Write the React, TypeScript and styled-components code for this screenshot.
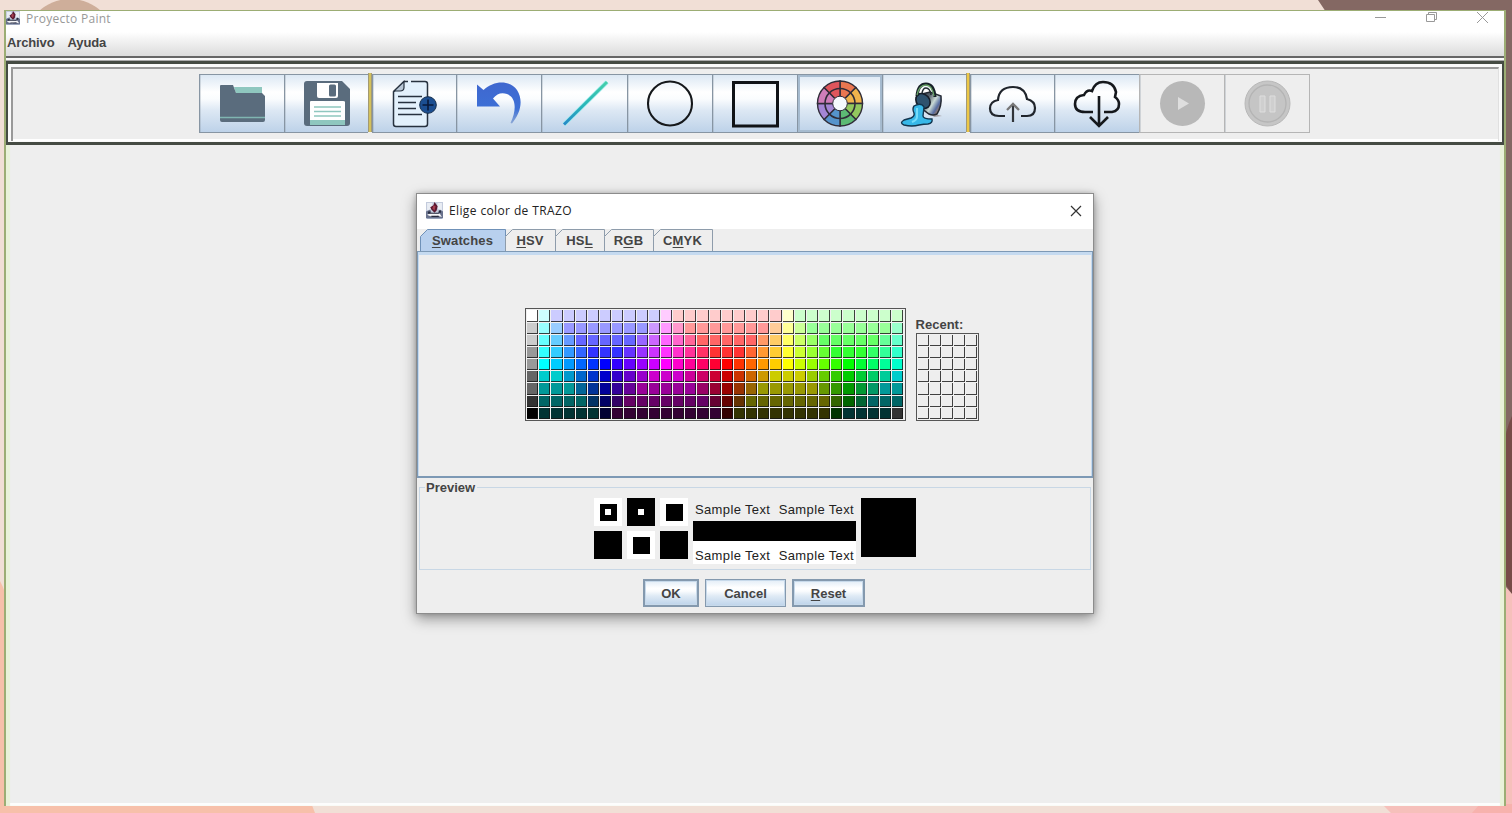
import React from "react";
import styled, { createGlobalStyle } from "styled-components";

const GlobalStyle = createGlobalStyle`
  * { box-sizing: border-box; }
  body { margin: 0; background: #f1dfd6; font-family: "Liberation Sans", Arial, sans-serif; color: #444; overflow: hidden; }
  svg { display: block; flex: none; }
`;

const Desktop = styled.div`
  position: relative;
  width: 1512px;
  height: 813px;
  padding: 10px 6px 7px 4px;
  display: flex;
`;

const Wallpaper = styled.svg`
  position: absolute;
  inset: 0;
`;

const AppWindow = styled.main`
  position: relative;
  flex: 1;
  display: flex;
  flex-direction: column;
  background: #eee;
  border: solid #9cad74;
  border-width: 1px 2px 0;
  box-shadow: inset 4px 0 1px #e9f2d9, inset -4px 0 1px #e9f2d9, inset 0 -3px 0 #fdfdfd;
`;

const TitleBar = styled.header`
  display: flex;
  height: 21px;
  background: #fff;
  padding-right: 14px;
`;

const TitleText = styled.h1<{ $tone: string; $spacing?: number }>`
  margin: 0;
  font: 400 12px/16px "Open Sans", "Noto Sans", sans-serif;
  letter-spacing: ${(p) => p.$spacing ?? 0}px;
  color: ${(p) => p.$tone};
  white-space: nowrap;
`;

const AppTitle = styled.div`
  display: flex;
  gap: 6px;
  flex: 1;
`;

const WindowControls = styled.div`
  display: flex;
  gap: 37px;
`;

const MenuBar = styled.nav`
  display: flex;
  gap: 13px;
  height: 24px;
  padding: 2px 1px;
  background: linear-gradient(#fff, #f4f4f4 30%, #dcdcdc);
`;

const MenuItem = styled.span`
  font-size: 13px;
  font-weight: 700;
  line-height: 18px;
  letter-spacing: -0.13px;
`;

const MenuRule = styled.div`
  height: 5px;
  background: linear-gradient(#666 0 2px, #fafafa 2px 4px, #aaa 4px);
`;

const ToolBarFrame = styled.section`
  height: 84px;
  border: solid #454b43;
  border-width: 3px 2px;
  padding: 3px;
  background: #fafafa;
`;

const ToolBar = styled.div`
  display: flex;
  justify-content: center;
  height: 74px;
  padding: 5px 3px 0 0;
  border: 2px solid #999;
  border-right: 1px solid #e0e0e0;
  border-bottom: 0;
  background: linear-gradient(#eee 0 70px, #fff 70px);
`;

const ToolButton = styled.button<{ $disabled?: boolean; $focused?: boolean; $width?: number }>`
  width: ${(p) => p.$width ?? 85}px;
  height: 59px;
  padding: 0;
  display: grid;
  place-items: center;
  border: 1px solid ${(p) => (p.$disabled ? "#b5b5b5" : "#8795a3")};
  border-right-width: 0;
  box-shadow: ${(p) => (p.$focused ? "inset 0 0 0 2px #a6bbcf" : "inset 1px 0 0 rgba(135,149,163,.3)")};
  background: ${(p) => (p.$disabled ? "#eee" : "linear-gradient(#dce8f4, #fff 30%, #fafcfe 42%, #dde8f4 62%, #bdd2e9)")};
  &:last-child { border-right-width: 1px; }
`;

const ToolSeparator = styled.i<{ $color: string }>`
  width: 4px;
  height: 59px;
  margin-top: -1px;
  border: solid #a39a74;
  border-width: 0 1px;
  background: ${(p) => p.$color};
`;

const Dialog = styled.section`
  position: absolute;
  left: 410px;
  top: 182px;
  width: 678px;
  height: 421px;
  display: flex;
  flex-direction: column;
  border: 1px solid #8c8c8c;
  background: #eee;
  box-shadow: 0 5px 13px rgba(0, 0, 0, 0.38), 0 0 5px rgba(0, 0, 0, 0.2);
`;

const DialogTitle = styled.header`
  display: flex;
  align-items: center;
  height: 35px;
  padding: 0 11px 2px 9px;
  gap: 6px;
  background: #fff;
  svg:last-child { margin-left: auto; }
`;

const TabRow = styled.div`
  display: flex;
  height: 22px;
  padding-left: 3px;
`;

const Tab = styled.div<{ $width: number }>`
  width: ${(p) => p.$width}px;
  position: relative;
  display: grid;
  place-items: center;
  font-size: 13px;
  font-weight: 700;
  letter-spacing: 0.15px;
  isolation: isolate;
  svg { position: absolute; inset: 0; z-index: -1; }
`;

const Mnemonic = styled.u`
  text-underline-offset: 2px;
  text-decoration-thickness: 1px;
`;

const ChooserPanel = styled.div`
  display: flex;
  align-items: flex-end;
  height: 227px;
  gap: 11px;
  padding: 0 0 55px 107px;
  border: 1px solid #7d99b5;
  border-bottom-width: 2px;
  box-shadow: inset 0 3px 0 #c5daf0, inset 1px 0 0 #c5daf0, inset -1px 0 0 #c5daf0;
`;

const Palette = styled.div<{ $columns: number; $rows: number }>`
  display: grid;
  grid-template-columns: repeat(${(p) => p.$columns}, 12.18px);
  grid-template-rows: repeat(${(p) => p.$rows}, 12.18px);
  width: ${(p) => p.$columns * 12.18 + 3}px;
  height: ${(p) => p.$rows * 12.18 + 3}px;
  padding: 1px;
  border: 1px solid #555;
  background: #f1f1f1;
`;

const Swatch = styled.span<{ $rgb: string }>`
  margin: 0 1px 1px 0;
  border: solid rgba(20, 20, 20, 0.8);
  border-width: 0 1px 1px 0;
  background: ${(p) => p.$rgb};
`;

const Recent = styled.div`
  display: flex;
  flex-direction: column;
  margin-left: -1px;
  font-size: 13px;
  font-weight: 700;
  line-height: 16px;
`;

const PreviewGroup = styled.fieldset`
  height: 91px;
  margin: 1px 2px 0;
  padding: 2px 0 0;
  border: 1px solid #c8d7e5;
  display: flex;
  justify-content: center;
`;

const PreviewLegend = styled.legend`
  margin-left: 5px;
  padding: 0 2px 0 1px;
  font-size: 13px;
  font-weight: 700;
  line-height: 17px;
`;

const PreviewContent = styled.div`
  display: flex;
  gap: 5px;
`;

const ToneGrid = styled.div`
  display: grid;
  grid-template: repeat(2, 28px) / repeat(3, 28px);
  gap: 5px;
`;

const Tone = styled.div<{ $background: string }>`
  display: grid;
  place-items: center;
  background: ${(p) => p.$background};
`;

const ToneCore = styled.div<{ $size: number; $fill: string }>`
  display: grid;
  place-items: center;
  width: ${(p) => p.$size}px;
  height: ${(p) => p.$size}px;
  background: ${(p) => p.$fill};
`;

const SampleStack = styled.div`
  display: grid;
  grid-template-rows: 23px 20px 23px;
  width: 163px;
`;

const SampleLine = styled.div<{ $background?: string }>`
  display: flex;
  align-items: center;
  justify-content: space-between;
  padding: 0 2px;
  font-size: 13px;
  letter-spacing: 0.36px;
  white-space: nowrap;
  color: #222;
  background: ${(p) => p.$background ?? "transparent"};
  &:last-child { align-items: flex-end; padding-bottom: 1px; }
`;

const CurrentColor = styled.div`
  width: 55px;
  height: 59px;
  background: #000;
`;

const ButtonRow = styled.footer`
  display: flex;
  justify-content: center;
  gap: 6px;
  padding: 9px 2px 0 0;
`;

const DialogButton = styled.button<{ $width: number; $heavy?: boolean }>`
  width: ${(p) => p.$width}px;
  height: 28px;
  padding: 1px 0 0;
  border: ${(p) => (p.$heavy ? 2 : 1)}px solid #8499ae;
  background: linear-gradient(#e2edf7, #fff 30%, #fafcfe 42%, #dfeaf5 62%, #bdd3ea);
  box-shadow: inset 0 0 0 1px #c7d9ea;
  font: 700 13px "Liberation Sans", Arial, sans-serif;
  color: #444;
`;

type Run = [string, number?];

/* Each palette row is stored as runs of hex triplets. */
const paletteRows: Run[][] = [
  [["fff"], ["cff"], ["ccf", 9], ["fcf"], ["fcc", 9], ["ffc"], ["cfc", 9]],
  [["ccc"], ["9ff"], ["9cf"], ["99f", 7], ["c9f"], ["f9f"], ["f9c"], ["f99", 7], ["fc9"], ["ff9"], ["cf9"], ["9f9", 7], ["9fc"]],
  [["ccc"], ["6ff"], ["6cf"], ["69f"], ["66f", 5], ["96f"], ["c6f"], ["f6f"], ["f6c"], ["f69"], ["f66", 5], ["f96"], ["fc6"], ["ff6"], ["cf6"], ["9f6"], ["6f6", 5], ["6f9"], ["6fc"]],
  [["999"], ["3ff"], ["3cf"], ["39f"], ["36f"], ["33f", 3], ["63f"], ["93f"], ["c3f"], ["f3f"], ["f3c"], ["f39"], ["f36"], ["f33", 3], ["f63"], ["f93"], ["fc3"], ["ff3"], ["cf3"], ["9f3"], ["6f3"], ["3f3", 3], ["3f6"], ["3f9"], ["3fc"]],
  [["999"], ["0ff"], ["0cf"], ["09f"], ["06f"], ["03f"], ["00f"], ["30f"], ["60f"], ["90f"], ["c0f"], ["f0f"], ["f0c"], ["f09"], ["f06"], ["f03"], ["f00"], ["f30"], ["f60"], ["f90"], ["fc0"], ["ff0"], ["cf0"], ["9f0"], ["6f0"], ["3f0"], ["0f0"], ["0f3"], ["0f6"], ["0f9"], ["0fc"]],
  [["666"], ["0cc", 2], ["09c"], ["06c"], ["03c"], ["00c"], ["30c"], ["60c"], ["90c"], ["c0c", 3], ["c09"], ["c06"], ["c03"], ["c00"], ["c30"], ["c60"], ["c90"], ["cc0", 3], ["9c0"], ["6c0"], ["3c0"], ["0c0"], ["0c3"], ["0c6"], ["0c9"], ["0cc"]],
  [["666"], ["099", 3], ["069"], ["039"], ["009"], ["309"], ["609"], ["909", 5], ["906"], ["903"], ["900"], ["930"], ["960"], ["990", 5], ["690"], ["390"], ["090"], ["093"], ["096"], ["099", 2]],
  [["333"], ["066", 4], ["036"], ["006"], ["306"], ["606", 7], ["603"], ["600"], ["630"], ["660", 7], ["360"], ["060"], ["063"], ["066", 3]],
  [["000"], ["033", 5], ["003"], ["303", 9], ["300"], ["330", 8], ["030"], ["033", 4], ["333"]],
];
const swatches = paletteRows.flatMap((row) => row.flatMap(([hex, n = 1]) => Array<string>(n).fill("#" + hex)));

const JavaIcon = ({ size = 16 }: { size?: number }) => (
  <svg width={size} height={size} viewBox="0 0 16 16">
    <path fill="#c3cbdc" d="M0 0h16v16H0z" />
    <path fill="#e9edf4" d="M1 1h5v5l-3 2H1zM11 1h4v7h-2l-3-3z" />
    <path fill="#68718c" d="M0 9l4-2 1 3 6 1 2-4 3 2v6H0z" />
    <path fill="#f5f5f7" d="M1 12l4-2 8 1 2 3-4-1-4 1-4-1z" />
    <path fill="#5b1830" d="M8 0l3 4-1 4-2 2-3-3-1-2 3-2z" />
    <path fill="#a73f50" d="M7 3l2 1-1 4-2-2z" />
    <path fill="#262a3e" d="M4 10h8v1H4zM12 8h2v2h-2zM2 9h2v2H2zM5 13h7v1H5z" />
    <path fill="#98a3ba" d="M1 15h14v1H1z" />
  </svg>
);

const Icon = ({ children, shift = 0 }: { children: React.ReactNode; shift?: number }) => (
  <svg width="83" height="57" viewBox={`${1 + shift} 1 83 57`} fill="none">{children}</svg>
);

const FolderIcon = () => (
  <Icon>
    <path d="M35 13H63v10H38z" fill="#8fc7bf" />
    <path d="M21 12q0-1 1-1h12l3 8h26l3 3v24q0 2-2 2H23q-2 0-2-2z" fill="#5a6c7d" />
    <path d="M21 43.500h45" stroke="#7fb5b1" strokeWidth="1.400" />
  </Icon>
);

const SaveIcon = () => (
  <Icon>
    <path d="M23 7h35l8 8v34q0 3-3 3H23q-3 0-3-3V10q0-3 3-3z" fill="#5a6c7d" />
    <path d="M33 9h21v13q0 2-2 2H35q-2 0-2-2z" fill="#fff" />
    <rect x="45" y="10.500" width="7" height="12" rx="1.500" fill="#5a6c7d" />
    <path d="M26 28q0-1 1-1h32q2 0 2 1v22H26z" fill="#fff" />
    <path d="M26 46h35v5H26z" fill="#8fc7bf" />
    <path d="M30 33h27M30 37.500h27M30 42h27" stroke="#8fc7bf" strokeWidth="1.300" />
  </Icon>
);

const DocumentIcon = () => (
  <Icon shift={1}>
    <path d="M33 7h21q3 0 3 3v40q0 3-3 3H25q-3 0-3-3V18z" fill="#e3f1fc" />
    <path d="M37 7.500H33L22.500 18v32q0 2.500 2.500 2.500h29q2.500 0 2.500-2.500V10q0-2.500-2.500-2.500H40" stroke="#27323f" strokeWidth="1.500" />
    <path d="M33 7.500v6q0 3.500-4 3.500h-6z" fill="#b8c6d5" stroke="#27323f" strokeWidth="1.200" />
    <path d="M27 22.500h24M27 28.500h18M27 34.500h18M27 40.500h24" stroke="#27323f" strokeWidth="1.600" />
    <circle cx="57" cy="31" r="8.300" fill="#1b4e91" stroke="#142d4c" />
    <path d="M51.500 31h11M57 25.500v11" stroke="#091a3a" strokeWidth="1.600" />
  </Icon>
);

const UndoIcon = () => (
  <Icon>
    <defs>
      <linearGradient id="undo-fill" x1="0" y1="0" x2="0" y2="1">
        <stop stopColor="#3f67cf" /><stop offset=".65" stopColor="#3d70d6" /><stop offset="1" stopColor="#8ba7d5" />
      </linearGradient>
    </defs>
    <path d="M21 10.500L27.500 16C38 6 54 6 61 16c7 11 3 24-5 33.500l-1.500-.5C61 36 60 23 51 20q-8-3-14 4.500L44 32.500H21z" fill="url(#undo-fill)" />
  </Icon>
);

const LineIcon = () => (
  <Icon>
    <defs>
      <linearGradient id="line-stroke" x1="0" y1="1" x2="1" y2="0">
        <stop stopColor="#2788c7" /><stop offset=".45" stopColor="#28b6b9" /><stop offset="1" stopColor="#45cfaa" />
      </linearGradient>
    </defs>
    <path d="M22 50.500L65 8" stroke="#a5eef0" strokeWidth="4.500" />
    <path d="M22 50.500L65 8" stroke="url(#line-stroke)" strokeWidth="3" />
  </Icon>
);

const wheelColors = ["#ea7650", "#efb34c", "#92c85e", "#5dba74", "#5593cc", "#a486d5", "#cf7db9", "#df555c"];

const WheelIcon = () => {
  const point = (angle: number, r: number) => `${43 + Math.sin(angle) * r} ${29.5 - Math.cos(angle) * r}`;
  return (
    <Icon>
      {wheelColors.map((color, i) => {
        const from = (i * Math.PI) / 4;
        return (
          <path key={color} d={`M43 29.5L${point(from, 22.5)}A22.5 22.5 0 0 1 ${point(from + Math.PI / 4, 22.5)}Z`} fill={color} stroke="#302c38" strokeWidth="1.4" />
        );
      })}
      <circle cx="43" cy="29.500" r="15" stroke="#302c38" strokeWidth="1.600" />
      <circle cx="43" cy="29.500" r="7.300" fill="#f5f9fd" stroke="#302c38" strokeWidth="1" />
    </Icon>
  );
};

const BucketIcon = () => (
  <Icon>
    <defs>
      <linearGradient id="bucket-metal" x1="0" y1=".2" x2="1" y2=".8">
        <stop stopColor="#3b4654" /><stop offset=".35" stopColor="#57616b" /><stop offset=".6" stopColor="#c9d9d5" /><stop offset=".8" stopColor="#566ca0" /><stop offset="1" stopColor="#c28749" />
      </linearGradient>
    </defs>
    <path d="M48 39l12 3-8 1z" fill="#a39ca0" />
    <path d="M36 21l12-3 11 4q1 10-4 18-4 2-8 0l-8-6z" fill="url(#bucket-metal)" stroke="#252a34" strokeWidth="1.500" />
    <ellipse cx="41" cy="27" rx="8" ry="6.500" transform="rotate(50 41 27)" fill="#2e526e" stroke="#161d29" strokeWidth="1.600" />
    <path d="M35 22Q36 10 44 10q8 0 9 13" stroke="#172129" strokeWidth="3" />
    <path d="M35 21Q37 11 44 11q6 0 8 11" stroke="#6aa568" strokeWidth="1.300" />
    <path d="M40 19q1-5 4-5 4 0 5 7" stroke="#202b30" strokeWidth="1.500" />
    <path d="M32 32q7-4 10 1l-1 9q0 3 9 3 1 4-4 5-4 0-9 1-7 2-15 0-5-2 0-5l7-2q4-2 3-5-2-4 0-7z" fill="#38b8e8" stroke="#12364f" strokeWidth="1.400" />
    <path d="M35 34v9q0 3-5 5" stroke="#75ddfa" strokeWidth="2" />
  </Icon>
);

const CloudUpIcon = () => (
  <Icon>
    <path d="M35 42H29Q20 42 20 34.500q0-7 8-8.500 1-13 15-13 12 0 14 12 8 2 8 9 0 8-8 8h-6" stroke="#20252c" strokeWidth="2.200" />
    <path d="M43 48V31" stroke="#30343a" strokeWidth="2.200" />
    <path d="M37 36l6-6 6 6" stroke="#777" strokeWidth="2.300" />
  </Icon>
);

const CloudDownIcon = () => (
  <Icon>
    <path d="M39 38H31Q21 38 21 30q0-8 9-9 3-6 8-4Q41 8 49 8q11 0 13 10l-1 5q4 3 4 7 0 7-7 8h-8" stroke="#15181c" strokeWidth="2.600" />
    <path d="M45 22V52M36 43l9 9 9-9" stroke="#15181c" strokeWidth="2.600" />
  </Icon>
);

const SquareTool = () => <Icon><rect x="21.500" y="8.500" width="44" height="43.500" stroke="#101317" strokeWidth="3" /></Icon>;
const CircleTool = () => <Icon><circle cx="43" cy="29.500" r="22" stroke="#15181b" strokeWidth="2.100" /></Icon>;
const PlayTool = () => <Icon><circle cx="43.500" cy="29.500" r="22.500" fill="#b8b8b8" /><path d="M39 23l11 6.500L39 36z" fill="#dedede" /></Icon>;
const PauseTool = () => (
  <Icon>
    <circle cx="43.500" cy="29.500" r="22.500" fill="#c6c6c6" stroke="#b8b8b8" />
    <circle cx="43.500" cy="29.500" r="18.500" fill="#c5c5c5" stroke="#b4b4b4" strokeWidth="1.300" />
    <path d="M36 22h5v16h-5zM46 22h5v16h-5z" fill="#cfcfcf" stroke="#dedede" />
  </Icon>
);

const tabs: [string, string, string, number][] = [
  ["", "S", "watches", 85],
  ["", "H", "SV", 50],
  ["HS", "L", "", 49],
  ["R", "G", "B", 49],
  ["C", "M", "YK", 59],
];

export default function App() {
  return (
    <>
      <GlobalStyle />
      <Desktop>
        <Wallpaper width="1512" height="813">
          <circle cx="70" cy="45" r="46" fill="#ceae9a" />
          <path d="M1318 0H1512V600H1500V30H1338z" fill="#846863" />
          <path d="M1512 416Q1505 430 1504 450V582L1512 594z" fill="#774b47" />
          <path d="M1500 580L1512 594V813H1391L1382 804H1500z" fill="#f6c0bb" />
          <path d="M1480 804h32v9h-40z" fill="#f7b2ad" />
          <path d="M0 581Q5 590 8 604V800H310l5 13H0z" fill="#f7c0aa" />
        </Wallpaper>
        <AppWindow>
          <TitleBar>
            <AppTitle><JavaIcon size={14} /><TitleText $tone="#999" $spacing={0.28}>Proyecto Paint</TitleText></AppTitle>
            <WindowControls>
              <svg width="14" height="14" stroke="#999"><path d="M1 6.500h11" /></svg>
              <svg width="14" height="14" fill="none" stroke="#999"><path d="M3.500 3V1.500h8v7H10M1.500 3.500h8v7h-8z" /></svg>
              <svg width="14" height="14" stroke="#999"><path d="M1 1l11 11M12 1L1 12" /></svg>
            </WindowControls>
          </TitleBar>
          <MenuBar><MenuItem>Archivo</MenuItem><MenuItem>Ayuda</MenuItem></MenuBar>
          <MenuRule />
          <ToolBarFrame>
            <ToolBar>
              <ToolButton><FolderIcon /></ToolButton>
              <ToolButton $width={84}><SaveIcon /></ToolButton>
              <ToolSeparator $color="#d3c15c" />
              <ToolButton $width={84}><DocumentIcon /></ToolButton>
              <ToolButton><UndoIcon /></ToolButton>
              <ToolButton $width={86}><LineIcon /></ToolButton>
              <ToolButton><CircleTool /></ToolButton>
              <ToolButton><SquareTool /></ToolButton>
              <ToolButton $focused><WheelIcon /></ToolButton>
              <ToolButton $width={84}><BucketIcon /></ToolButton>
              <ToolSeparator $color="#ecc746" />
              <ToolButton $width={84}><CloudUpIcon /></ToolButton>
              <ToolButton><CloudDownIcon /></ToolButton>
              <ToolButton $disabled><PlayTool /></ToolButton>
              <ToolButton $disabled $width={86}><PauseTool /></ToolButton>
            </ToolBar>
          </ToolBarFrame>

          <Dialog>
            <DialogTitle>
              <JavaIcon size={17} />
              <TitleText as="h2" $tone="#222" $spacing={0.38}>Elige color de TRAZO</TitleText>
              <svg width="12" height="12" stroke="#333" strokeWidth="1.200"><path d="M1 1l10 10M11 1L1 11" /></svg>
            </DialogTitle>
            <TabRow>
              {tabs.map(([before, key, after, width], i) => (
                <Tab key={key} $width={width}>
                  <svg width={width + 1} height="22" fill={i === 0 ? "#b8d0ee" : "#eee"} stroke={i === 0 ? "#6f91b8" : "#8e9cab"}>
                    <path d={`M.5 22V7.500L7.500 .5H${width + 0.5}V22`} />
                  </svg>
                  <span>{before}<Mnemonic>{key}</Mnemonic>{after}</span>
                </Tab>
              ))}
            </TabRow>
            <ChooserPanel>
              <Palette $columns={31} $rows={9}>{swatches.map((rgb, i) => <Swatch key={i} $rgb={rgb} />)}</Palette>
              <Recent>
                Recent:
                <Palette $columns={5} $rows={7}>{Array.from({ length: 35 }, (_, i) => <Swatch key={i} $rgb="#eee" />)}</Palette>
              </Recent>
            </ChooserPanel>
            <PreviewGroup>
              <PreviewLegend>Preview</PreviewLegend>
              <PreviewContent>
                <ToneGrid>
                  <Tone $background="#fff"><ToneCore $size={17} $fill="#000"><ToneCore $size={6} $fill="#fff" /></ToneCore></Tone>
                  <Tone $background="#000"><ToneCore $size={6} $fill="#fff" /></Tone>
                  <Tone $background="#fff"><ToneCore $size={17} $fill="#000" /></Tone>
                  <Tone $background="#000" />
                  <Tone $background="#fff"><ToneCore $size={17} $fill="#000" /></Tone>
                  <Tone $background="#000" />
                </ToneGrid>
                <SampleStack>
                  <SampleLine><span>Sample Text</span><span>Sample Text</span></SampleLine>
                  <SampleLine $background="#000" />
                  <SampleLine $background="#fff"><span>Sample Text</span><span>Sample Text</span></SampleLine>
                </SampleStack>
                <CurrentColor />
              </PreviewContent>
            </PreviewGroup>
            <ButtonRow>
              <DialogButton $width={56} $heavy>OK</DialogButton>
              <DialogButton $width={81}>Cancel</DialogButton>
              <DialogButton $width={73} $heavy><Mnemonic>R</Mnemonic>eset</DialogButton>
            </ButtonRow>
          </Dialog>
        </AppWindow>
      </Desktop>
    </>
  );
}
